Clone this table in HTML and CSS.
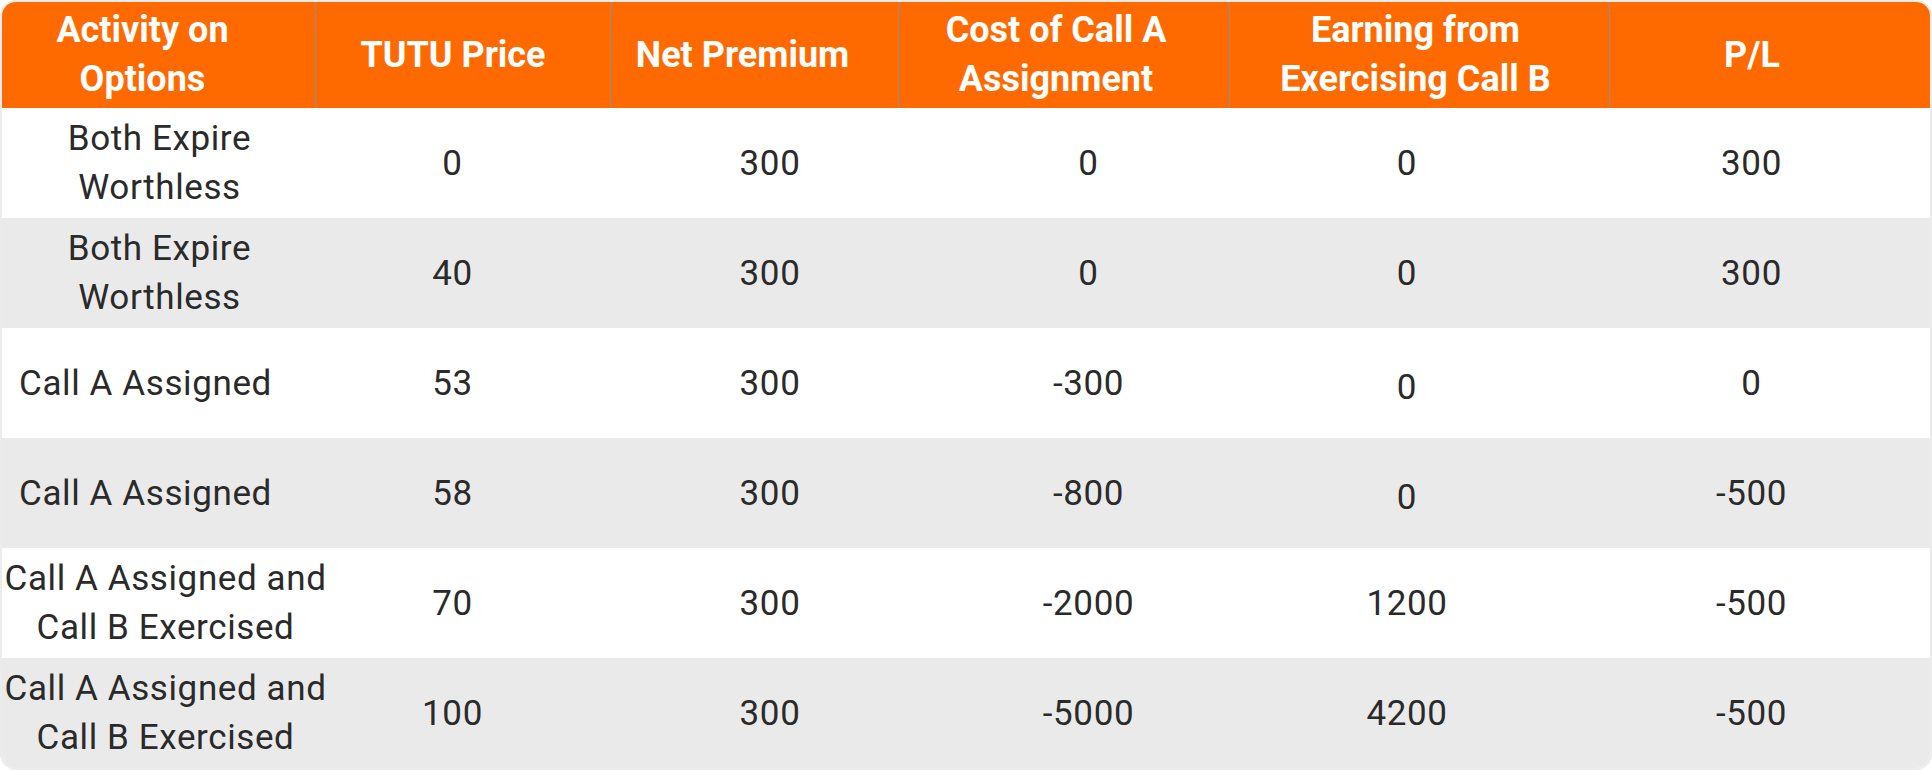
FILE: index.html
```html
<!DOCTYPE html>
<html>
<head>
<meta charset="utf-8">
<link rel="stylesheet" href="styles.css">
</head>
<body>
<div class="table">
  <div class="row head">
    <div class="cell c0">Activity on<br>Options</div>
    <div class="cell c1">TUTU Price</div>
    <div class="cell c2">Net Premium</div>
    <div class="cell c3">Cost of Call A<br>Assignment</div>
    <div class="cell c4">Earning from<br>Exercising Call B</div>
    <div class="cell c5">P/L</div>
  </div>
  <div class="row body">
    <div class="cell c0">Both Expire<br>Worthless</div>
    <div class="cell c1">0</div>
    <div class="cell c2">300</div>
    <div class="cell c3">0</div>
    <div class="cell c4">0</div>
    <div class="cell c5">300</div>
  </div>
  <div class="row body alt">
    <div class="cell c0">Both Expire<br>Worthless</div>
    <div class="cell c1">40</div>
    <div class="cell c2">300</div>
    <div class="cell c3">0</div>
    <div class="cell c4">0</div>
    <div class="cell c5">300</div>
  </div>
  <div class="row body">
    <div class="cell c0 single">Call A Assigned</div>
    <div class="cell c1">53</div>
    <div class="cell c2">300</div>
    <div class="cell c3">-300</div>
    <div class="cell c4 low">0</div>
    <div class="cell c5">0</div>
  </div>
  <div class="row body alt">
    <div class="cell c0 single">Call A Assigned</div>
    <div class="cell c1">58</div>
    <div class="cell c2">300</div>
    <div class="cell c3">-800</div>
    <div class="cell c4 low">0</div>
    <div class="cell c5">-500</div>
  </div>
  <div class="row body">
    <div class="cell c0 wide">Call A Assigned and<br>Call B Exercised</div>
    <div class="cell c1">70</div>
    <div class="cell c2">300</div>
    <div class="cell c3">-2000</div>
    <div class="cell c4">1200</div>
    <div class="cell c5">-500</div>
  </div>
  <div class="row body alt">
    <div class="cell c0 wide">Call A Assigned and<br>Call B Exercised</div>
    <div class="cell c1">100</div>
    <div class="cell c2">300</div>
    <div class="cell c3">-5000</div>
    <div class="cell c4">4200</div>
    <div class="cell c5">-500</div>
  </div>
</div>
</body>
</html>
```

FILE: styles.css
```css
html, body {
  margin: 0;
  padding: 0;
  background: #ffffff;
}

.table {
  width: 1928px;
  border: 2px solid #ececec;
  border-radius: 16px;
  overflow: hidden;
  font-family: Roboto, "Liberation Sans", sans-serif;
}

.row {
  display: grid;
  grid-template-columns: 313px 295px 288px 331px 380px 321px;
}

.cell {
  display: flex;
  align-items: center;
  justify-content: center;
  text-align: center;
  white-space: nowrap;
  box-sizing: border-box;
}

.head {
  height: 106px;
  background: #ff6a00;
  color: #ffffff;
  font-weight: 700;
  font-size: 36px;
  line-height: 49px;
}

.head .cell + .cell {
  border-left: 1px solid #8f8f8f;
}

.head .c0 { padding-right: 32px; }
.head .c1 { padding-right: 20px; }
.head .c2 { padding-right: 24px; }
.head .c3 { padding-right: 16px; }
.head .c4 { padding-right: 8px; }
.head .c5 { padding-right: 36px; }

.body {
  height: 110px;
  background: #ffffff;
  color: #2a2a2a;
  font-size: 35px;
  line-height: 49px;
  letter-spacing: 0.6px;
}

.body.alt {
  background: #eaeaea;
}

.body .c0 { padding-left: 2px; }
.body .c0.single { padding-left: 0; padding-right: 26px; }
.body .c0.wide { padding-left: 14px; }
.body .c1 { padding-right: 20px; }
.body .c2 { padding-left: 32px; }
.body .c3 { padding-left: 50px; }
.body .c4 { padding-right: 24px; }
.body .c5 { padding-right: 36px; }

.body .low {
  padding-top: 8px;
}
```
